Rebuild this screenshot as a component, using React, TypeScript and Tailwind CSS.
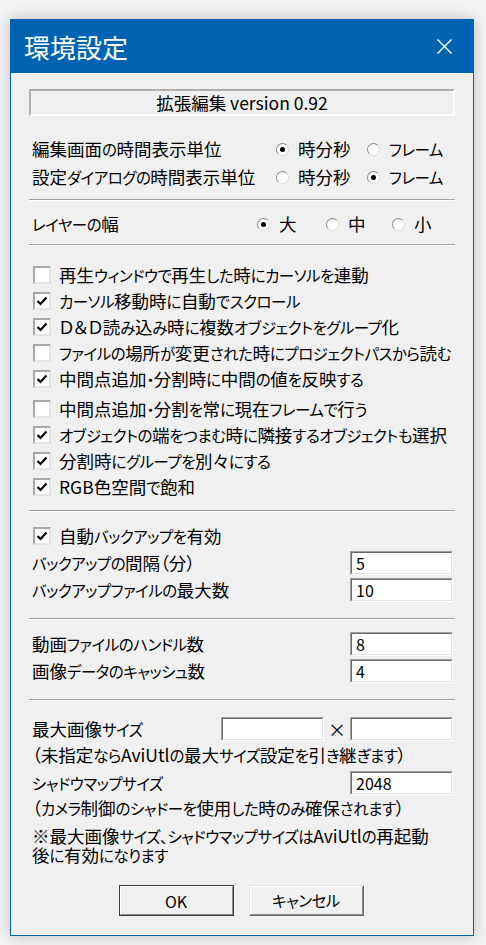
import React from 'react';

const font = "font-['Noto_Sans_CJK_JP',sans-serif] [font-feature-settings:'palt']";

// MS UI Gothic draws kana narrower than kanji; shrink kana runs to match
function Jp({ text }: { text: string }) {
  const parts = text.split(/([\u3001\u3041-\u30ff]+)/);
  return (
    <>
      {parts.map((p, i) =>
        i % 2 ? (
          <span key={i} className="text-[15.5px] tracking-[-0.5px]">
            {p}
          </span>
        ) : (
          p
        ),
      )}
    </>
  );
}

const checks: [string, boolean][] = [
  ['再生ウィンドウで再生した時にカーソルを連動', false],
  ['カーソル移動時に自動でスクロール', true],
  ['Ｄ＆Ｄ読み込み時に複数オブジェクトをグループ化', true],
  ['ファイルの場所が変更された時にプロジェクトパスから読む', false],
  ['中間点追加・分割時に中間の値を反映する', true],
  ['中間点追加・分割を常に現在フレームで行う', false],
  ['オブジェクトの端をつまむ時に隣接するオブジェクトも選択', true],
  ['分割時にグループを別々にする', true],
  ['RGB色空間で飽和', true],
];

function Separator({ className = '' }: { className?: string }) {
  return <div className={`border-t border-b border-t-[#a0a0a0] border-b-white ${className}`} />;
}

function Radio({ checked }: { checked?: boolean }) {
  return (
    <span className="flex h-[13px] w-[13px] shrink-0 items-center justify-center rounded-full border border-t-[#8c8c8c] border-l-[#8c8c8c] border-b-[#dcdcdc] border-r-[#dcdcdc] bg-white">
      {checked && <span className="h-[5px] w-[5px] rounded-full bg-black" />}
    </span>
  );
}

function Checkbox({ checked }: { checked?: boolean }) {
  return (
    <span className="flex h-[18px] w-[18px] shrink-0 items-center justify-center border-2 border-t-[#a8a8a8] border-l-[#a8a8a8] border-b-[#e4e4e4] border-r-[#e4e4e4] bg-white">
      {checked && (
        <svg width="14" height="14" viewBox="0 0 14 14">
          <path d="M2.5 7 L5.5 10 L11.5 3.5" fill="none" stroke="#000" strokeWidth="2.2" />
        </svg>
      )}
    </span>
  );
}

function Field({ value = '', className = '' }: { value?: string; className?: string }) {
  return (
    <div className={`h-[24px] w-[103px] shrink-0 border border-t-[#a0a0a0] border-l-[#a0a0a0] border-b-white border-r-white ${className}`}>
      <div className="flex h-full items-center border border-t-[#696969] border-l-[#696969] border-b-[#e3e3e3] border-r-[#e3e3e3] bg-white pl-[4px] text-[16px]">
        {value}
      </div>
    </div>
  );
}

function Button({ label, primary }: { label: string; primary?: boolean }) {
  const outer = primary
    ? 'border-[#3c3c3c]'
    : 'border-t-[#e3e3e3] border-l-[#e3e3e3] border-b-[#696969] border-r-[#696969]';
  return (
    <div className={`h-[31px] w-[115px] border ${outer}`}>
      <div className="flex h-full items-center justify-center border border-t-white border-l-white border-b-[#8a8a8a] border-r-[#8a8a8a] bg-[#f0f0f0] text-[16px]">
        <Jp text={label} />
      </div>
    </div>
  );
}

function RadioItem({ label, checked, className }: { label: string; checked?: boolean; className: string }) {
  return (
    <div className={`flex items-center gap-[9px] ${className}`}>
      <Radio checked={checked} />
      <span>
        <Jp text={label} />
      </span>
    </div>
  );
}

function FieldRow({ label, value, className = '' }: { label: string; value: string; className?: string }) {
  return (
    <div className={`flex h-[24px] items-center ${className}`}>
      <span className="flex-1 pl-[3px]">
        <Jp text={label} />
      </span>
      <Field value={value} className="mr-[2px]" />
    </div>
  );
}

export default function App() {
  return (
    <div className={`min-h-screen bg-[#f3f3f3] pl-[10px] pt-[19px] text-black ${font}`}>
      <div className="w-[464px] border border-[#0063b1] bg-[#f0f0f0] shadow-[0_0_14px_rgba(0,0,0,0.22)]">
        <div className="flex h-[53px] items-center justify-between bg-[#0063b1] pl-[13px] pr-[21px] text-white">
          <span className="text-[26px] leading-none">環境設定</span>
          <svg width="15" height="15" viewBox="0 0 15 15">
            <path d="M0.5 0.5 L14.5 14.5 M14.5 0.5 L0.5 14.5" stroke="#fff" strokeWidth="1.4" />
          </svg>
        </div>

        <div className="px-[18px] pb-[19px] pt-[16px] text-[17.5px] leading-none whitespace-nowrap">
          <div className="flex h-[27px] items-center justify-center border-2 border-t-[#b0b0b0] border-l-[#b0b0b0] border-b-white border-r-white">
            拡張編集 version 0.92
          </div>

          <div className="mt-[19px] flex h-[28px] items-center">
            <span className="w-[247px] pl-[3px]">
              <Jp text="編集画面の時間表示単位" />
            </span>
            <RadioItem label="時分秒" checked className="w-[91px]" />
            <RadioItem label="フレーム" className="" />
          </div>
          <div className="flex h-[28px] items-center">
            <span className="w-[247px] pl-[3px]">
              <Jp text="設定ダイアログの時間表示単位" />
            </span>
            <RadioItem label="時分秒" className="w-[91px]" />
            <RadioItem label="フレーム" checked className="" />
          </div>

          <Separator className="mt-[8px]" />

          <div className="mt-[10px] flex h-[26px] items-center">
            <span className="w-[228px] pl-[3px]">
              <Jp text="レイヤーの幅" />
            </span>
            <RadioItem label="大" checked className="w-[69px]" />
            <RadioItem label="中" className="w-[66px]" />
            <RadioItem label="小" className="" />
          </div>

          <Separator className="mt-[7px]" />

          <div className="mt-[16px]">
            {checks.map(([label, on], i) => (
              <div
                key={label}
                className={`flex h-[26px] items-center gap-[8px] pl-[4px] ${i === 5 ? 'mt-[4px]' : ''}`}
              >
                <Checkbox checked={on} />
                <span>
                  <Jp text={label} />
                </span>
              </div>
            ))}
          </div>

          <Separator className="mt-[10px]" />

          <div className="mt-[11px] flex h-[26px] items-center gap-[8px] pl-[4px]">
            <Checkbox checked />
            <span>
              <Jp text="自動バックアップを有効" />
            </span>
          </div>
          <FieldRow label="バックアップの間隔（分）" value="5" className="mt-[2px]" />
          <FieldRow label="バックアップファイルの最大数" value="10" className="mt-[3px]" />

          <Separator className="mt-[16px]" />

          <FieldRow label="動画ファイルのハンドル数" value="8" className="mt-[12px]" />
          <FieldRow label="画像データのキャッシュ数" value="4" className="mt-[3px]" />

          <Separator className="mt-[16px]" />

          <div className="mt-[16px] flex h-[24px] items-center">
            <span className="flex-1 pl-[3px]">
              <Jp text="最大画像サイズ" />
            </span>
            <Field />
            <span className="w-[26px] text-center text-[18px]">×</span>
            <Field className="mr-[2px]" />
          </div>
          <div className="flex h-[27px] items-center pl-[3px]">
            <span>
              <Jp text="（未指定ならAviUtlの最大サイズ設定を引き継ぎます）" />
            </span>
          </div>
          <FieldRow label="シャドウマップサイズ" value="2048" className="mt-[3px]" />
          <div className="flex h-[25px] items-center pl-[3px]">
            <span>
              <Jp text="（カメラ制御のシャドーを使用した時のみ確保されます）" />
            </span>
          </div>
          <div className="mt-[7px] flex flex-col gap-[1px] pl-[3px]">
            <span className="h-[18px]">
              <Jp text="※最大画像サイズ、シャドウマップサイズはAviUtlの再起動" />
            </span>
            <span className="h-[18px]">
              <Jp text="後に有効になります" />
            </span>
          </div>

          <div className="mt-[21px] flex justify-center gap-[15px] pr-[2px]">
            <Button label="OK" primary />
            <Button label="キャンセル" />
          </div>
        </div>
      </div>
    </div>
  );
}
